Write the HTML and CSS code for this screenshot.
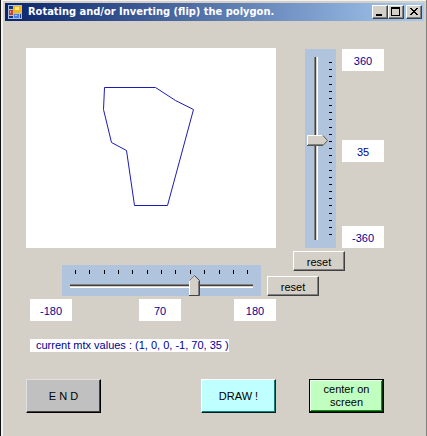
FILE: index.html
```html
<!DOCTYPE html>
<html lang="en">
<head>
<meta charset="utf-8">
<title>Rotating and/or Inverting (flip) the polygon.</title>
<link rel="stylesheet" href="styles.css">
</head>
<body>
<div class="window">
  <header class="titlebar">
    <svg class="app-icon" width="14" height="14" viewBox="0 0 14 14" shape-rendering="crispEdges" aria-hidden="true">
      <rect width="14" height="14" fill="#a9c0de"/>
      <rect x="1" y="1" width="4" height="3" fill="#17377c"/>
      <rect x="1" y="5" width="4" height="5" fill="#c8402c"/>
      <rect x="2" y="6" width="1" height="2" fill="#f0a090"/>
      <rect x="1" y="11" width="4" height="2" fill="#17377c"/>
      <rect x="6" y="1" width="7" height="7" fill="#f0b81c"/>
      <rect x="7" y="2" width="4" height="3" fill="#ffe680"/>
      <rect x="6" y="9" width="5" height="4" fill="#4a80e0"/>
      <rect x="7" y="10" width="2" height="1" fill="#a8d0ff"/>
      <rect x="12" y="9" width="1" height="4" fill="#17377c"/>
    </svg>
    <h1 class="title">Rotating and/or Inverting (flip) the polygon.</h1>
    <button class="caption" type="button" aria-label="Minimize"><svg width="12" height="10" viewBox="0 0 12 10" shape-rendering="crispEdges"><path d="M2 7h6v2H2z"/></svg></button>
    <button class="caption" type="button" aria-label="Maximize"><svg width="12" height="10" viewBox="0 0 12 10" shape-rendering="crispEdges"><path d="M1 0h9v9H1zM2 2v6h7V2z" fill-rule="evenodd"/></svg></button>
    <button class="caption close" type="button" aria-label="Close"><svg width="12" height="10" viewBox="0 0 12 10" shape-rendering="crispEdges"><path d="M2 1h2v1h1v1h2V2h1V1h2v1H9v1H8v1H7v1h1v1h1v1h1v1H8V7H7V6H5v1H4v1H2V7h1V6h1V5h1V4H4V3H3V2H2z"/></svg></button>
  </header>
  <main class="form">
    <section class="stage">
      <div class="canvas">
        <svg width="250" height="200" viewBox="0 0 250 200" role="img" aria-label="Polygon">
          <path d="M78.500 39.500H129.500L149.500 52.500L167.500 61.500L141.500 157.500H108.500L100.500 102.500L85.500 94.500L77.500 61.500Z" fill="none" stroke="#1c1cb4"/>
        </svg>
      </div>
      <div class="track track-v">
        <input class="range range-v" type="range" min="-360" max="360" value="35" aria-label="Vertical offset">
        <svg class="ticks" width="3" height="199" viewBox="0 0 3 199" shape-rendering="crispEdges" aria-hidden="true"><path d="M0 13h3M0 20h3M0 27h3M0 35h3M0 42h3M0 49h3M0 56h3M0 63h3M0 70h3M0 78h3M0 85h3M0 92h3M0 99h3M0 106h3M0 113h3M0 121h3M0 128h3M0 135h3M0 142h3M0 149h3M0 156h3M0 164h3M0 171h3M0 178h3M0 185h3" transform="translate(0 .5)" stroke="#000"/></svg>
      </div>
      <div class="scale-v">
        <output class="value">360</output>
        <output class="value current-v">35</output>
        <output class="value">-360</output>
      </div>
    </section>
    <section class="lower">
      <div class="track track-h">
        <svg class="ticks" width="199" height="4" viewBox="0 0 199 4" shape-rendering="crispEdges" aria-hidden="true"><path d="M13 0v4M27 0v4M42 0v4M56 0v4M70 0v4M85 0v4M99 0v4M113 0v4M128 0v4M142 0v4M157 0v4M171 0v4M185 0v4" transform="translate(.5 0)" stroke="#000"/></svg>
        <input class="range range-h" type="range" min="-180" max="180" value="70" aria-label="Horizontal offset">
      </div>
      <div class="resets">
        <button class="reset reset-v" type="button">reset</button>
        <button class="reset" type="button">reset</button>
      </div>
    </section>
    <div class="scale-h">
      <output class="value">-180</output>
      <output class="value current-h">70</output>
      <output class="value">180</output>
    </div>
    <output class="matrix">current mtx values : (1, 0, 0, -1, 70, 35 )</output>
    <footer class="actions">
      <button class="action end" type="button">E N D</button>
      <button class="action draw" type="button">DRAW !</button>
      <button class="action center" type="button">center on screen</button>
    </footer>
  </main>
</div>
</body>
</html>
```

FILE: styles.css
```css
* { box-sizing: border-box; }

body {
  margin: 0;
  background: #d4d0c8;
  font: 11px/13px "Liberation Sans", Arial, sans-serif;
  color: #000;
}

button { font: inherit; color: inherit; padding: 0; }

.window {
  min-height: 100vh;
  border-left: 1px solid #111;
  border-right: 1px solid #808080;
  padding: 3px 2px 0 4px;
  box-shadow: inset 2px 1px 0 #f4f2ee;
}

.titlebar {
  display: flex;
  align-items: center;
  height: 18px;
  padding: 0 2px 0 3px;
  background: linear-gradient(90deg, #0a246a, #a6caf0);
}

.app-icon { flex: none; }

.title {
  flex: 1;
  margin: 0 0 0 6px;
  font: bold 11px/18px "DejaVu Sans Condensed", "DejaVu Sans", sans-serif;
  color: #fff;
  white-space: nowrap;
}

.caption {
  display: flex;
  width: 16px;
  height: 14px;
  border: 1px solid;
  border-color: #fff #404040 #404040 #fff;
  background: #d4d0c8;
  box-shadow: inset -1px -1px 0 #808080;
  padding: 1px;
}

.close { margin-left: 2px; }

.form {
  padding: 27px 40px 23px 21px;
}

.stage { display: flex; }

.canvas {
  flex: 1;
  height: 200px;
  background: #fff;
}

.canvas svg { display: block; }

.track { background: #b0c4de; display: flex; }

.track-v {
  width: 31px;
  height: 199px;
  margin: 1px 6px 0 29px;
  padding-left: 2px;
  align-items: center;
}

.track-h {
  flex: 1;
  flex-direction: column;
  height: 31px;
  margin-left: 36px;
  padding-top: 5px;
}

.ticks { display: block; flex: none; }

.range {
  appearance: none;
  margin: 0;
  background: transparent;
}

.range-v {
  writing-mode: vertical-lr;
  direction: rtl;
  width: 22px;
  height: 183px;
}

.range-h {
  width: auto;
  height: 21px;
  margin: 1px 8px 0;
}

.range::-webkit-slider-runnable-track {
  background: no-repeat center;
}

.range-v::-webkit-slider-runnable-track {
  width: 22px;
  height: 100%;
  background-image: linear-gradient(90deg, #808080 1px, #404040 1px 2px, #d4d0c8 2px 3px, #fff 3px);
  background-position: 7px 0;
  background-size: 4px 100%;
}

.range-h::-webkit-slider-runnable-track {
  height: 21px;
  background-image: linear-gradient(#808080 1px, #404040 1px 2px, #d4d0c8 2px 3px, #fff 3px);
  background-position: 0 9px;
  background-size: 100% 4px;
}

.range::-webkit-slider-thumb {
  appearance: none;
  background: no-repeat center;
}

.range-v::-webkit-slider-thumb {
  width: 22px;
  height: 11px;
  background-image: url("data:image/svg+xml,%3Csvg xmlns='http://www.w3.org/2000/svg' width='22' height='11'%3E%3Cpath d='M0 0H16L21 5.500L16 11H0Z' fill='%23d4d0c8'/%3E%3Cpath d='M.5 10V.5H15.500' fill='none' stroke='%23fff'/%3E%3Cpath d='M1 9.500H16' stroke='%23808080'/%3E%3Cpath d='M0 10.500H16L20.500 5.500L16 .5' fill='none' stroke='%23555'/%3E%3C/svg%3E");
}

.range-h::-webkit-slider-thumb {
  width: 11px;
  height: 21px;
  background-image: url("data:image/svg+xml,%3Csvg xmlns='http://www.w3.org/2000/svg' width='11' height='21'%3E%3Cpath d='M0 21V5.500L5.500 0L11 5.500V21Z' fill='%23d4d0c8'/%3E%3Cpath d='M.5 20V5.500' stroke='%23fff'/%3E%3Cpath d='M9.500 6V20M.5 5.500L5.500 .5' fill='none' stroke='%23808080'/%3E%3Cpath d='M0 20.500H10.500V5.500L5.500 .5' fill='none' stroke='%23444'/%3E%3C/svg%3E");
}

.scale-v {
  display: flex;
  flex-direction: column;
  justify-content: space-between;
  margin-top: 1px;
}

.value {
  display: block;
  width: 42px;
  height: 22px;
  background: #fff;
  color: #000096;
  line-height: 24px;
  text-align: center;
}

.current-v { margin-top: 4px; }

.current-h { margin-left: 14px; }

.lower {
  display: flex;
  align-items: flex-end;
  margin-top: 3px;
}

.resets {
  display: flex;
  flex-direction: column;
  gap: 5px;
  width: 117px;
  margin-left: 6px;
}

.reset {
  width: 52px;
  height: 20px;
  border: 1px solid;
  border-color: #fff #404040 #404040 #fff;
  background: #d4d0c8;
  box-shadow: inset -1px -1px 0 #808080;
  line-height: 20px;
}

.reset-v { margin-left: 26px; }

.scale-h {
  display: flex;
  justify-content: space-between;
  margin: 3px 108px 0 4px;
}

.matrix {
  display: block;
  width: fit-content;
  margin: 18px 0 0 4px;
  padding: 0 0 0 6px;
  background: #fff;
  color: #000096;
  white-space: nowrap;
}

.actions {
  display: flex;
  margin-top: 27px;
}

.action {
  width: 75px;
  height: 34px;
  border: 1px solid;
}

.end {
  background: #c0c0c0;
  border-color: #e0e0e0 #000 #000 #e0e0e0;
  box-shadow: inset -1px -1px 0 #404040;
}

.draw {
  margin-left: auto;
  background: #c0ffff;
  border-color: #fff #002020 #002020 #fff;
  box-shadow: inset -1px -1px 0 #108080;
}

.center {
  margin-left: 33px;
  padding: 0 8px;
  background: #c0ffc0;
  border-color: #000;
  box-shadow: inset -1px -1px 0 #003000, inset 1px 1px 0 #e8ffe8, inset -2px -2px 0 #109010;
}
```
